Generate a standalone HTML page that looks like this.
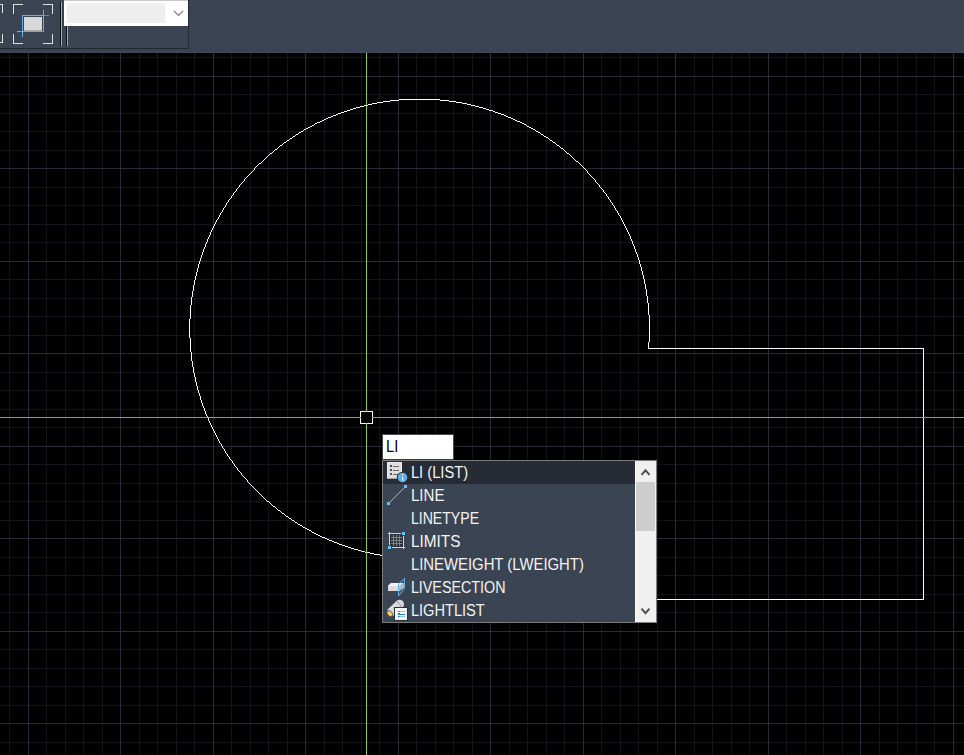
<!DOCTYPE html>
<html><head><meta charset="utf-8"><style>
*{margin:0;padding:0;box-sizing:border-box}
html,body{width:964px;height:755px;overflow:hidden;background:#000000;font-family:"Liberation Sans",sans-serif}
.abs{position:absolute}
svg{position:absolute;left:0;top:0}
.it{position:absolute;left:411px;height:23px;line-height:23px;font-size:16px;color:#f4f4f4;white-space:nowrap;transform-origin:-1px 17px}
</style></head><body>
<svg width="964" height="755" shape-rendering="crispEdges">
<path fill="#111318" d="M9 53h1v702h-1zM46 53h1v702h-1zM65 53h1v702h-1zM83 53h1v702h-1zM102 53h1v702h-1zM139 53h1v702h-1zM157 53h1v702h-1zM176 53h1v702h-1zM194 53h1v702h-1zM231 53h1v702h-1zM250 53h1v702h-1zM268 53h1v702h-1zM287 53h1v702h-1zM324 53h1v702h-1zM342 53h1v702h-1zM361 53h1v702h-1zM379 53h1v702h-1zM416 53h1v702h-1zM435 53h1v702h-1zM453 53h1v702h-1zM472 53h1v702h-1zM509 53h1v702h-1zM527 53h1v702h-1zM546 53h1v702h-1zM564 53h1v702h-1zM601 53h1v702h-1zM620 53h1v702h-1zM638 53h1v702h-1zM657 53h1v702h-1zM694 53h1v702h-1zM712 53h1v702h-1zM731 53h1v702h-1zM749 53h1v702h-1zM786 53h1v702h-1zM805 53h1v702h-1zM823 53h1v702h-1zM842 53h1v702h-1zM879 53h1v702h-1zM897 53h1v702h-1zM916 53h1v702h-1zM934 53h1v702h-1zM0 57h964v1h-964zM0 94h964v1h-964zM0 113h964v1h-964zM0 131h964v1h-964zM0 150h964v1h-964zM0 187h964v1h-964zM0 205h964v1h-964zM0 224h964v1h-964zM0 242h964v1h-964zM0 279h964v1h-964zM0 298h964v1h-964zM0 316h964v1h-964zM0 335h964v1h-964zM0 372h964v1h-964zM0 390h964v1h-964zM0 409h964v1h-964zM0 427h964v1h-964zM0 464h964v1h-964zM0 483h964v1h-964zM0 501h964v1h-964zM0 520h964v1h-964zM0 557h964v1h-964zM0 575h964v1h-964zM0 594h964v1h-964zM0 612h964v1h-964zM0 649h964v1h-964zM0 668h964v1h-964zM0 686h964v1h-964zM0 705h964v1h-964zM0 742h964v1h-964z"/><path fill="#272b38" d="M28 53h1v702h-1zM120 53h1v702h-1zM213 53h1v702h-1zM305 53h1v702h-1zM398 53h1v702h-1zM490 53h1v702h-1zM583 53h1v702h-1zM675 53h1v702h-1zM768 53h1v702h-1zM860 53h1v702h-1zM953 53h1v702h-1zM0 76h964v1h-964zM0 168h964v1h-964zM0 261h964v1h-964zM0 353h964v1h-964zM0 446h964v1h-964zM0 538h964v1h-964zM0 631h964v1h-964zM0 723h964v1h-964z"/><path fill="#171a24" d="M9 57h1v1h-1zM9 94h1v1h-1zM9 113h1v1h-1zM9 131h1v1h-1zM9 150h1v1h-1zM9 187h1v1h-1zM9 205h1v1h-1zM9 224h1v1h-1zM9 242h1v1h-1zM9 279h1v1h-1zM9 298h1v1h-1zM9 316h1v1h-1zM9 335h1v1h-1zM9 372h1v1h-1zM9 390h1v1h-1zM9 409h1v1h-1zM9 427h1v1h-1zM9 464h1v1h-1zM9 483h1v1h-1zM9 501h1v1h-1zM9 520h1v1h-1zM9 557h1v1h-1zM9 575h1v1h-1zM9 594h1v1h-1zM9 612h1v1h-1zM9 649h1v1h-1zM9 668h1v1h-1zM9 686h1v1h-1zM9 705h1v1h-1zM9 742h1v1h-1zM46 57h1v1h-1zM46 94h1v1h-1zM46 113h1v1h-1zM46 131h1v1h-1zM46 150h1v1h-1zM46 187h1v1h-1zM46 205h1v1h-1zM46 224h1v1h-1zM46 242h1v1h-1zM46 279h1v1h-1zM46 298h1v1h-1zM46 316h1v1h-1zM46 335h1v1h-1zM46 372h1v1h-1zM46 390h1v1h-1zM46 409h1v1h-1zM46 427h1v1h-1zM46 464h1v1h-1zM46 483h1v1h-1zM46 501h1v1h-1zM46 520h1v1h-1zM46 557h1v1h-1zM46 575h1v1h-1zM46 594h1v1h-1zM46 612h1v1h-1zM46 649h1v1h-1zM46 668h1v1h-1zM46 686h1v1h-1zM46 705h1v1h-1zM46 742h1v1h-1zM65 57h1v1h-1zM65 94h1v1h-1zM65 113h1v1h-1zM65 131h1v1h-1zM65 150h1v1h-1zM65 187h1v1h-1zM65 205h1v1h-1zM65 224h1v1h-1zM65 242h1v1h-1zM65 279h1v1h-1zM65 298h1v1h-1zM65 316h1v1h-1zM65 335h1v1h-1zM65 372h1v1h-1zM65 390h1v1h-1zM65 409h1v1h-1zM65 427h1v1h-1zM65 464h1v1h-1zM65 483h1v1h-1zM65 501h1v1h-1zM65 520h1v1h-1zM65 557h1v1h-1zM65 575h1v1h-1zM65 594h1v1h-1zM65 612h1v1h-1zM65 649h1v1h-1zM65 668h1v1h-1zM65 686h1v1h-1zM65 705h1v1h-1zM65 742h1v1h-1zM83 57h1v1h-1zM83 94h1v1h-1zM83 113h1v1h-1zM83 131h1v1h-1zM83 150h1v1h-1zM83 187h1v1h-1zM83 205h1v1h-1zM83 224h1v1h-1zM83 242h1v1h-1zM83 279h1v1h-1zM83 298h1v1h-1zM83 316h1v1h-1zM83 335h1v1h-1zM83 372h1v1h-1zM83 390h1v1h-1zM83 409h1v1h-1zM83 427h1v1h-1zM83 464h1v1h-1zM83 483h1v1h-1zM83 501h1v1h-1zM83 520h1v1h-1zM83 557h1v1h-1zM83 575h1v1h-1zM83 594h1v1h-1zM83 612h1v1h-1zM83 649h1v1h-1zM83 668h1v1h-1zM83 686h1v1h-1zM83 705h1v1h-1zM83 742h1v1h-1zM102 57h1v1h-1zM102 94h1v1h-1zM102 113h1v1h-1zM102 131h1v1h-1zM102 150h1v1h-1zM102 187h1v1h-1zM102 205h1v1h-1zM102 224h1v1h-1zM102 242h1v1h-1zM102 279h1v1h-1zM102 298h1v1h-1zM102 316h1v1h-1zM102 335h1v1h-1zM102 372h1v1h-1zM102 390h1v1h-1zM102 409h1v1h-1zM102 427h1v1h-1zM102 464h1v1h-1zM102 483h1v1h-1zM102 501h1v1h-1zM102 520h1v1h-1zM102 557h1v1h-1zM102 575h1v1h-1zM102 594h1v1h-1zM102 612h1v1h-1zM102 649h1v1h-1zM102 668h1v1h-1zM102 686h1v1h-1zM102 705h1v1h-1zM102 742h1v1h-1zM139 57h1v1h-1zM139 94h1v1h-1zM139 113h1v1h-1zM139 131h1v1h-1zM139 150h1v1h-1zM139 187h1v1h-1zM139 205h1v1h-1zM139 224h1v1h-1zM139 242h1v1h-1zM139 279h1v1h-1zM139 298h1v1h-1zM139 316h1v1h-1zM139 335h1v1h-1zM139 372h1v1h-1zM139 390h1v1h-1zM139 409h1v1h-1zM139 427h1v1h-1zM139 464h1v1h-1zM139 483h1v1h-1zM139 501h1v1h-1zM139 520h1v1h-1zM139 557h1v1h-1zM139 575h1v1h-1zM139 594h1v1h-1zM139 612h1v1h-1zM139 649h1v1h-1zM139 668h1v1h-1zM139 686h1v1h-1zM139 705h1v1h-1zM139 742h1v1h-1zM157 57h1v1h-1zM157 94h1v1h-1zM157 113h1v1h-1zM157 131h1v1h-1zM157 150h1v1h-1zM157 187h1v1h-1zM157 205h1v1h-1zM157 224h1v1h-1zM157 242h1v1h-1zM157 279h1v1h-1zM157 298h1v1h-1zM157 316h1v1h-1zM157 335h1v1h-1zM157 372h1v1h-1zM157 390h1v1h-1zM157 409h1v1h-1zM157 427h1v1h-1zM157 464h1v1h-1zM157 483h1v1h-1zM157 501h1v1h-1zM157 520h1v1h-1zM157 557h1v1h-1zM157 575h1v1h-1zM157 594h1v1h-1zM157 612h1v1h-1zM157 649h1v1h-1zM157 668h1v1h-1zM157 686h1v1h-1zM157 705h1v1h-1zM157 742h1v1h-1zM176 57h1v1h-1zM176 94h1v1h-1zM176 113h1v1h-1zM176 131h1v1h-1zM176 150h1v1h-1zM176 187h1v1h-1zM176 205h1v1h-1zM176 224h1v1h-1zM176 242h1v1h-1zM176 279h1v1h-1zM176 298h1v1h-1zM176 316h1v1h-1zM176 335h1v1h-1zM176 372h1v1h-1zM176 390h1v1h-1zM176 409h1v1h-1zM176 427h1v1h-1zM176 464h1v1h-1zM176 483h1v1h-1zM176 501h1v1h-1zM176 520h1v1h-1zM176 557h1v1h-1zM176 575h1v1h-1zM176 594h1v1h-1zM176 612h1v1h-1zM176 649h1v1h-1zM176 668h1v1h-1zM176 686h1v1h-1zM176 705h1v1h-1zM176 742h1v1h-1zM194 57h1v1h-1zM194 94h1v1h-1zM194 113h1v1h-1zM194 131h1v1h-1zM194 150h1v1h-1zM194 187h1v1h-1zM194 205h1v1h-1zM194 224h1v1h-1zM194 242h1v1h-1zM194 279h1v1h-1zM194 298h1v1h-1zM194 316h1v1h-1zM194 335h1v1h-1zM194 372h1v1h-1zM194 390h1v1h-1zM194 409h1v1h-1zM194 427h1v1h-1zM194 464h1v1h-1zM194 483h1v1h-1zM194 501h1v1h-1zM194 520h1v1h-1zM194 557h1v1h-1zM194 575h1v1h-1zM194 594h1v1h-1zM194 612h1v1h-1zM194 649h1v1h-1zM194 668h1v1h-1zM194 686h1v1h-1zM194 705h1v1h-1zM194 742h1v1h-1zM231 57h1v1h-1zM231 94h1v1h-1zM231 113h1v1h-1zM231 131h1v1h-1zM231 150h1v1h-1zM231 187h1v1h-1zM231 205h1v1h-1zM231 224h1v1h-1zM231 242h1v1h-1zM231 279h1v1h-1zM231 298h1v1h-1zM231 316h1v1h-1zM231 335h1v1h-1zM231 372h1v1h-1zM231 390h1v1h-1zM231 409h1v1h-1zM231 427h1v1h-1zM231 464h1v1h-1zM231 483h1v1h-1zM231 501h1v1h-1zM231 520h1v1h-1zM231 557h1v1h-1zM231 575h1v1h-1zM231 594h1v1h-1zM231 612h1v1h-1zM231 649h1v1h-1zM231 668h1v1h-1zM231 686h1v1h-1zM231 705h1v1h-1zM231 742h1v1h-1zM250 57h1v1h-1zM250 94h1v1h-1zM250 113h1v1h-1zM250 131h1v1h-1zM250 150h1v1h-1zM250 187h1v1h-1zM250 205h1v1h-1zM250 224h1v1h-1zM250 242h1v1h-1zM250 279h1v1h-1zM250 298h1v1h-1zM250 316h1v1h-1zM250 335h1v1h-1zM250 372h1v1h-1zM250 390h1v1h-1zM250 409h1v1h-1zM250 427h1v1h-1zM250 464h1v1h-1zM250 483h1v1h-1zM250 501h1v1h-1zM250 520h1v1h-1zM250 557h1v1h-1zM250 575h1v1h-1zM250 594h1v1h-1zM250 612h1v1h-1zM250 649h1v1h-1zM250 668h1v1h-1zM250 686h1v1h-1zM250 705h1v1h-1zM250 742h1v1h-1zM268 57h1v1h-1zM268 94h1v1h-1zM268 113h1v1h-1zM268 131h1v1h-1zM268 150h1v1h-1zM268 187h1v1h-1zM268 205h1v1h-1zM268 224h1v1h-1zM268 242h1v1h-1zM268 279h1v1h-1zM268 298h1v1h-1zM268 316h1v1h-1zM268 335h1v1h-1zM268 372h1v1h-1zM268 390h1v1h-1zM268 409h1v1h-1zM268 427h1v1h-1zM268 464h1v1h-1zM268 483h1v1h-1zM268 501h1v1h-1zM268 520h1v1h-1zM268 557h1v1h-1zM268 575h1v1h-1zM268 594h1v1h-1zM268 612h1v1h-1zM268 649h1v1h-1zM268 668h1v1h-1zM268 686h1v1h-1zM268 705h1v1h-1zM268 742h1v1h-1zM287 57h1v1h-1zM287 94h1v1h-1zM287 113h1v1h-1zM287 131h1v1h-1zM287 150h1v1h-1zM287 187h1v1h-1zM287 205h1v1h-1zM287 224h1v1h-1zM287 242h1v1h-1zM287 279h1v1h-1zM287 298h1v1h-1zM287 316h1v1h-1zM287 335h1v1h-1zM287 372h1v1h-1zM287 390h1v1h-1zM287 409h1v1h-1zM287 427h1v1h-1zM287 464h1v1h-1zM287 483h1v1h-1zM287 501h1v1h-1zM287 520h1v1h-1zM287 557h1v1h-1zM287 575h1v1h-1zM287 594h1v1h-1zM287 612h1v1h-1zM287 649h1v1h-1zM287 668h1v1h-1zM287 686h1v1h-1zM287 705h1v1h-1zM287 742h1v1h-1zM324 57h1v1h-1zM324 94h1v1h-1zM324 113h1v1h-1zM324 131h1v1h-1zM324 150h1v1h-1zM324 187h1v1h-1zM324 205h1v1h-1zM324 224h1v1h-1zM324 242h1v1h-1zM324 279h1v1h-1zM324 298h1v1h-1zM324 316h1v1h-1zM324 335h1v1h-1zM324 372h1v1h-1zM324 390h1v1h-1zM324 409h1v1h-1zM324 427h1v1h-1zM324 464h1v1h-1zM324 483h1v1h-1zM324 501h1v1h-1zM324 520h1v1h-1zM324 557h1v1h-1zM324 575h1v1h-1zM324 594h1v1h-1zM324 612h1v1h-1zM324 649h1v1h-1zM324 668h1v1h-1zM324 686h1v1h-1zM324 705h1v1h-1zM324 742h1v1h-1zM342 57h1v1h-1zM342 94h1v1h-1zM342 113h1v1h-1zM342 131h1v1h-1zM342 150h1v1h-1zM342 187h1v1h-1zM342 205h1v1h-1zM342 224h1v1h-1zM342 242h1v1h-1zM342 279h1v1h-1zM342 298h1v1h-1zM342 316h1v1h-1zM342 335h1v1h-1zM342 372h1v1h-1zM342 390h1v1h-1zM342 409h1v1h-1zM342 427h1v1h-1zM342 464h1v1h-1zM342 483h1v1h-1zM342 501h1v1h-1zM342 520h1v1h-1zM342 557h1v1h-1zM342 575h1v1h-1zM342 594h1v1h-1zM342 612h1v1h-1zM342 649h1v1h-1zM342 668h1v1h-1zM342 686h1v1h-1zM342 705h1v1h-1zM342 742h1v1h-1zM361 57h1v1h-1zM361 94h1v1h-1zM361 113h1v1h-1zM361 131h1v1h-1zM361 150h1v1h-1zM361 187h1v1h-1zM361 205h1v1h-1zM361 224h1v1h-1zM361 242h1v1h-1zM361 279h1v1h-1zM361 298h1v1h-1zM361 316h1v1h-1zM361 335h1v1h-1zM361 372h1v1h-1zM361 390h1v1h-1zM361 409h1v1h-1zM361 427h1v1h-1zM361 464h1v1h-1zM361 483h1v1h-1zM361 501h1v1h-1zM361 520h1v1h-1zM361 557h1v1h-1zM361 575h1v1h-1zM361 594h1v1h-1zM361 612h1v1h-1zM361 649h1v1h-1zM361 668h1v1h-1zM361 686h1v1h-1zM361 705h1v1h-1zM361 742h1v1h-1zM379 57h1v1h-1zM379 94h1v1h-1zM379 113h1v1h-1zM379 131h1v1h-1zM379 150h1v1h-1zM379 187h1v1h-1zM379 205h1v1h-1zM379 224h1v1h-1zM379 242h1v1h-1zM379 279h1v1h-1zM379 298h1v1h-1zM379 316h1v1h-1zM379 335h1v1h-1zM379 372h1v1h-1zM379 390h1v1h-1zM379 409h1v1h-1zM379 427h1v1h-1zM379 464h1v1h-1zM379 483h1v1h-1zM379 501h1v1h-1zM379 520h1v1h-1zM379 557h1v1h-1zM379 575h1v1h-1zM379 594h1v1h-1zM379 612h1v1h-1zM379 649h1v1h-1zM379 668h1v1h-1zM379 686h1v1h-1zM379 705h1v1h-1zM379 742h1v1h-1zM416 57h1v1h-1zM416 94h1v1h-1zM416 113h1v1h-1zM416 131h1v1h-1zM416 150h1v1h-1zM416 187h1v1h-1zM416 205h1v1h-1zM416 224h1v1h-1zM416 242h1v1h-1zM416 279h1v1h-1zM416 298h1v1h-1zM416 316h1v1h-1zM416 335h1v1h-1zM416 372h1v1h-1zM416 390h1v1h-1zM416 409h1v1h-1zM416 427h1v1h-1zM416 464h1v1h-1zM416 483h1v1h-1zM416 501h1v1h-1zM416 520h1v1h-1zM416 557h1v1h-1zM416 575h1v1h-1zM416 594h1v1h-1zM416 612h1v1h-1zM416 649h1v1h-1zM416 668h1v1h-1zM416 686h1v1h-1zM416 705h1v1h-1zM416 742h1v1h-1zM435 57h1v1h-1zM435 94h1v1h-1zM435 113h1v1h-1zM435 131h1v1h-1zM435 150h1v1h-1zM435 187h1v1h-1zM435 205h1v1h-1zM435 224h1v1h-1zM435 242h1v1h-1zM435 279h1v1h-1zM435 298h1v1h-1zM435 316h1v1h-1zM435 335h1v1h-1zM435 372h1v1h-1zM435 390h1v1h-1zM435 409h1v1h-1zM435 427h1v1h-1zM435 464h1v1h-1zM435 483h1v1h-1zM435 501h1v1h-1zM435 520h1v1h-1zM435 557h1v1h-1zM435 575h1v1h-1zM435 594h1v1h-1zM435 612h1v1h-1zM435 649h1v1h-1zM435 668h1v1h-1zM435 686h1v1h-1zM435 705h1v1h-1zM435 742h1v1h-1zM453 57h1v1h-1zM453 94h1v1h-1zM453 113h1v1h-1zM453 131h1v1h-1zM453 150h1v1h-1zM453 187h1v1h-1zM453 205h1v1h-1zM453 224h1v1h-1zM453 242h1v1h-1zM453 279h1v1h-1zM453 298h1v1h-1zM453 316h1v1h-1zM453 335h1v1h-1zM453 372h1v1h-1zM453 390h1v1h-1zM453 409h1v1h-1zM453 427h1v1h-1zM453 464h1v1h-1zM453 483h1v1h-1zM453 501h1v1h-1zM453 520h1v1h-1zM453 557h1v1h-1zM453 575h1v1h-1zM453 594h1v1h-1zM453 612h1v1h-1zM453 649h1v1h-1zM453 668h1v1h-1zM453 686h1v1h-1zM453 705h1v1h-1zM453 742h1v1h-1zM472 57h1v1h-1zM472 94h1v1h-1zM472 113h1v1h-1zM472 131h1v1h-1zM472 150h1v1h-1zM472 187h1v1h-1zM472 205h1v1h-1zM472 224h1v1h-1zM472 242h1v1h-1zM472 279h1v1h-1zM472 298h1v1h-1zM472 316h1v1h-1zM472 335h1v1h-1zM472 372h1v1h-1zM472 390h1v1h-1zM472 409h1v1h-1zM472 427h1v1h-1zM472 464h1v1h-1zM472 483h1v1h-1zM472 501h1v1h-1zM472 520h1v1h-1zM472 557h1v1h-1zM472 575h1v1h-1zM472 594h1v1h-1zM472 612h1v1h-1zM472 649h1v1h-1zM472 668h1v1h-1zM472 686h1v1h-1zM472 705h1v1h-1zM472 742h1v1h-1zM509 57h1v1h-1zM509 94h1v1h-1zM509 113h1v1h-1zM509 131h1v1h-1zM509 150h1v1h-1zM509 187h1v1h-1zM509 205h1v1h-1zM509 224h1v1h-1zM509 242h1v1h-1zM509 279h1v1h-1zM509 298h1v1h-1zM509 316h1v1h-1zM509 335h1v1h-1zM509 372h1v1h-1zM509 390h1v1h-1zM509 409h1v1h-1zM509 427h1v1h-1zM509 464h1v1h-1zM509 483h1v1h-1zM509 501h1v1h-1zM509 520h1v1h-1zM509 557h1v1h-1zM509 575h1v1h-1zM509 594h1v1h-1zM509 612h1v1h-1zM509 649h1v1h-1zM509 668h1v1h-1zM509 686h1v1h-1zM509 705h1v1h-1zM509 742h1v1h-1zM527 57h1v1h-1zM527 94h1v1h-1zM527 113h1v1h-1zM527 131h1v1h-1zM527 150h1v1h-1zM527 187h1v1h-1zM527 205h1v1h-1zM527 224h1v1h-1zM527 242h1v1h-1zM527 279h1v1h-1zM527 298h1v1h-1zM527 316h1v1h-1zM527 335h1v1h-1zM527 372h1v1h-1zM527 390h1v1h-1zM527 409h1v1h-1zM527 427h1v1h-1zM527 464h1v1h-1zM527 483h1v1h-1zM527 501h1v1h-1zM527 520h1v1h-1zM527 557h1v1h-1zM527 575h1v1h-1zM527 594h1v1h-1zM527 612h1v1h-1zM527 649h1v1h-1zM527 668h1v1h-1zM527 686h1v1h-1zM527 705h1v1h-1zM527 742h1v1h-1zM546 57h1v1h-1zM546 94h1v1h-1zM546 113h1v1h-1zM546 131h1v1h-1zM546 150h1v1h-1zM546 187h1v1h-1zM546 205h1v1h-1zM546 224h1v1h-1zM546 242h1v1h-1zM546 279h1v1h-1zM546 298h1v1h-1zM546 316h1v1h-1zM546 335h1v1h-1zM546 372h1v1h-1zM546 390h1v1h-1zM546 409h1v1h-1zM546 427h1v1h-1zM546 464h1v1h-1zM546 483h1v1h-1zM546 501h1v1h-1zM546 520h1v1h-1zM546 557h1v1h-1zM546 575h1v1h-1zM546 594h1v1h-1zM546 612h1v1h-1zM546 649h1v1h-1zM546 668h1v1h-1zM546 686h1v1h-1zM546 705h1v1h-1zM546 742h1v1h-1zM564 57h1v1h-1zM564 94h1v1h-1zM564 113h1v1h-1zM564 131h1v1h-1zM564 150h1v1h-1zM564 187h1v1h-1zM564 205h1v1h-1zM564 224h1v1h-1zM564 242h1v1h-1zM564 279h1v1h-1zM564 298h1v1h-1zM564 316h1v1h-1zM564 335h1v1h-1zM564 372h1v1h-1zM564 390h1v1h-1zM564 409h1v1h-1zM564 427h1v1h-1zM564 464h1v1h-1zM564 483h1v1h-1zM564 501h1v1h-1zM564 520h1v1h-1zM564 557h1v1h-1zM564 575h1v1h-1zM564 594h1v1h-1zM564 612h1v1h-1zM564 649h1v1h-1zM564 668h1v1h-1zM564 686h1v1h-1zM564 705h1v1h-1zM564 742h1v1h-1zM601 57h1v1h-1zM601 94h1v1h-1zM601 113h1v1h-1zM601 131h1v1h-1zM601 150h1v1h-1zM601 187h1v1h-1zM601 205h1v1h-1zM601 224h1v1h-1zM601 242h1v1h-1zM601 279h1v1h-1zM601 298h1v1h-1zM601 316h1v1h-1zM601 335h1v1h-1zM601 372h1v1h-1zM601 390h1v1h-1zM601 409h1v1h-1zM601 427h1v1h-1zM601 464h1v1h-1zM601 483h1v1h-1zM601 501h1v1h-1zM601 520h1v1h-1zM601 557h1v1h-1zM601 575h1v1h-1zM601 594h1v1h-1zM601 612h1v1h-1zM601 649h1v1h-1zM601 668h1v1h-1zM601 686h1v1h-1zM601 705h1v1h-1zM601 742h1v1h-1zM620 57h1v1h-1zM620 94h1v1h-1zM620 113h1v1h-1zM620 131h1v1h-1zM620 150h1v1h-1zM620 187h1v1h-1zM620 205h1v1h-1zM620 224h1v1h-1zM620 242h1v1h-1zM620 279h1v1h-1zM620 298h1v1h-1zM620 316h1v1h-1zM620 335h1v1h-1zM620 372h1v1h-1zM620 390h1v1h-1zM620 409h1v1h-1zM620 427h1v1h-1zM620 464h1v1h-1zM620 483h1v1h-1zM620 501h1v1h-1zM620 520h1v1h-1zM620 557h1v1h-1zM620 575h1v1h-1zM620 594h1v1h-1zM620 612h1v1h-1zM620 649h1v1h-1zM620 668h1v1h-1zM620 686h1v1h-1zM620 705h1v1h-1zM620 742h1v1h-1zM638 57h1v1h-1zM638 94h1v1h-1zM638 113h1v1h-1zM638 131h1v1h-1zM638 150h1v1h-1zM638 187h1v1h-1zM638 205h1v1h-1zM638 224h1v1h-1zM638 242h1v1h-1zM638 279h1v1h-1zM638 298h1v1h-1zM638 316h1v1h-1zM638 335h1v1h-1zM638 372h1v1h-1zM638 390h1v1h-1zM638 409h1v1h-1zM638 427h1v1h-1zM638 464h1v1h-1zM638 483h1v1h-1zM638 501h1v1h-1zM638 520h1v1h-1zM638 557h1v1h-1zM638 575h1v1h-1zM638 594h1v1h-1zM638 612h1v1h-1zM638 649h1v1h-1zM638 668h1v1h-1zM638 686h1v1h-1zM638 705h1v1h-1zM638 742h1v1h-1zM657 57h1v1h-1zM657 94h1v1h-1zM657 113h1v1h-1zM657 131h1v1h-1zM657 150h1v1h-1zM657 187h1v1h-1zM657 205h1v1h-1zM657 224h1v1h-1zM657 242h1v1h-1zM657 279h1v1h-1zM657 298h1v1h-1zM657 316h1v1h-1zM657 335h1v1h-1zM657 372h1v1h-1zM657 390h1v1h-1zM657 409h1v1h-1zM657 427h1v1h-1zM657 464h1v1h-1zM657 483h1v1h-1zM657 501h1v1h-1zM657 520h1v1h-1zM657 557h1v1h-1zM657 575h1v1h-1zM657 594h1v1h-1zM657 612h1v1h-1zM657 649h1v1h-1zM657 668h1v1h-1zM657 686h1v1h-1zM657 705h1v1h-1zM657 742h1v1h-1zM694 57h1v1h-1zM694 94h1v1h-1zM694 113h1v1h-1zM694 131h1v1h-1zM694 150h1v1h-1zM694 187h1v1h-1zM694 205h1v1h-1zM694 224h1v1h-1zM694 242h1v1h-1zM694 279h1v1h-1zM694 298h1v1h-1zM694 316h1v1h-1zM694 335h1v1h-1zM694 372h1v1h-1zM694 390h1v1h-1zM694 409h1v1h-1zM694 427h1v1h-1zM694 464h1v1h-1zM694 483h1v1h-1zM694 501h1v1h-1zM694 520h1v1h-1zM694 557h1v1h-1zM694 575h1v1h-1zM694 594h1v1h-1zM694 612h1v1h-1zM694 649h1v1h-1zM694 668h1v1h-1zM694 686h1v1h-1zM694 705h1v1h-1zM694 742h1v1h-1zM712 57h1v1h-1zM712 94h1v1h-1zM712 113h1v1h-1zM712 131h1v1h-1zM712 150h1v1h-1zM712 187h1v1h-1zM712 205h1v1h-1zM712 224h1v1h-1zM712 242h1v1h-1zM712 279h1v1h-1zM712 298h1v1h-1zM712 316h1v1h-1zM712 335h1v1h-1zM712 372h1v1h-1zM712 390h1v1h-1zM712 409h1v1h-1zM712 427h1v1h-1zM712 464h1v1h-1zM712 483h1v1h-1zM712 501h1v1h-1zM712 520h1v1h-1zM712 557h1v1h-1zM712 575h1v1h-1zM712 594h1v1h-1zM712 612h1v1h-1zM712 649h1v1h-1zM712 668h1v1h-1zM712 686h1v1h-1zM712 705h1v1h-1zM712 742h1v1h-1zM731 57h1v1h-1zM731 94h1v1h-1zM731 113h1v1h-1zM731 131h1v1h-1zM731 150h1v1h-1zM731 187h1v1h-1zM731 205h1v1h-1zM731 224h1v1h-1zM731 242h1v1h-1zM731 279h1v1h-1zM731 298h1v1h-1zM731 316h1v1h-1zM731 335h1v1h-1zM731 372h1v1h-1zM731 390h1v1h-1zM731 409h1v1h-1zM731 427h1v1h-1zM731 464h1v1h-1zM731 483h1v1h-1zM731 501h1v1h-1zM731 520h1v1h-1zM731 557h1v1h-1zM731 575h1v1h-1zM731 594h1v1h-1zM731 612h1v1h-1zM731 649h1v1h-1zM731 668h1v1h-1zM731 686h1v1h-1zM731 705h1v1h-1zM731 742h1v1h-1zM749 57h1v1h-1zM749 94h1v1h-1zM749 113h1v1h-1zM749 131h1v1h-1zM749 150h1v1h-1zM749 187h1v1h-1zM749 205h1v1h-1zM749 224h1v1h-1zM749 242h1v1h-1zM749 279h1v1h-1zM749 298h1v1h-1zM749 316h1v1h-1zM749 335h1v1h-1zM749 372h1v1h-1zM749 390h1v1h-1zM749 409h1v1h-1zM749 427h1v1h-1zM749 464h1v1h-1zM749 483h1v1h-1zM749 501h1v1h-1zM749 520h1v1h-1zM749 557h1v1h-1zM749 575h1v1h-1zM749 594h1v1h-1zM749 612h1v1h-1zM749 649h1v1h-1zM749 668h1v1h-1zM749 686h1v1h-1zM749 705h1v1h-1zM749 742h1v1h-1zM786 57h1v1h-1zM786 94h1v1h-1zM786 113h1v1h-1zM786 131h1v1h-1zM786 150h1v1h-1zM786 187h1v1h-1zM786 205h1v1h-1zM786 224h1v1h-1zM786 242h1v1h-1zM786 279h1v1h-1zM786 298h1v1h-1zM786 316h1v1h-1zM786 335h1v1h-1zM786 372h1v1h-1zM786 390h1v1h-1zM786 409h1v1h-1zM786 427h1v1h-1zM786 464h1v1h-1zM786 483h1v1h-1zM786 501h1v1h-1zM786 520h1v1h-1zM786 557h1v1h-1zM786 575h1v1h-1zM786 594h1v1h-1zM786 612h1v1h-1zM786 649h1v1h-1zM786 668h1v1h-1zM786 686h1v1h-1zM786 705h1v1h-1zM786 742h1v1h-1zM805 57h1v1h-1zM805 94h1v1h-1zM805 113h1v1h-1zM805 131h1v1h-1zM805 150h1v1h-1zM805 187h1v1h-1zM805 205h1v1h-1zM805 224h1v1h-1zM805 242h1v1h-1zM805 279h1v1h-1zM805 298h1v1h-1zM805 316h1v1h-1zM805 335h1v1h-1zM805 372h1v1h-1zM805 390h1v1h-1zM805 409h1v1h-1zM805 427h1v1h-1zM805 464h1v1h-1zM805 483h1v1h-1zM805 501h1v1h-1zM805 520h1v1h-1zM805 557h1v1h-1zM805 575h1v1h-1zM805 594h1v1h-1zM805 612h1v1h-1zM805 649h1v1h-1zM805 668h1v1h-1zM805 686h1v1h-1zM805 705h1v1h-1zM805 742h1v1h-1zM823 57h1v1h-1zM823 94h1v1h-1zM823 113h1v1h-1zM823 131h1v1h-1zM823 150h1v1h-1zM823 187h1v1h-1zM823 205h1v1h-1zM823 224h1v1h-1zM823 242h1v1h-1zM823 279h1v1h-1zM823 298h1v1h-1zM823 316h1v1h-1zM823 335h1v1h-1zM823 372h1v1h-1zM823 390h1v1h-1zM823 409h1v1h-1zM823 427h1v1h-1zM823 464h1v1h-1zM823 483h1v1h-1zM823 501h1v1h-1zM823 520h1v1h-1zM823 557h1v1h-1zM823 575h1v1h-1zM823 594h1v1h-1zM823 612h1v1h-1zM823 649h1v1h-1zM823 668h1v1h-1zM823 686h1v1h-1zM823 705h1v1h-1zM823 742h1v1h-1zM842 57h1v1h-1zM842 94h1v1h-1zM842 113h1v1h-1zM842 131h1v1h-1zM842 150h1v1h-1zM842 187h1v1h-1zM842 205h1v1h-1zM842 224h1v1h-1zM842 242h1v1h-1zM842 279h1v1h-1zM842 298h1v1h-1zM842 316h1v1h-1zM842 335h1v1h-1zM842 372h1v1h-1zM842 390h1v1h-1zM842 409h1v1h-1zM842 427h1v1h-1zM842 464h1v1h-1zM842 483h1v1h-1zM842 501h1v1h-1zM842 520h1v1h-1zM842 557h1v1h-1zM842 575h1v1h-1zM842 594h1v1h-1zM842 612h1v1h-1zM842 649h1v1h-1zM842 668h1v1h-1zM842 686h1v1h-1zM842 705h1v1h-1zM842 742h1v1h-1zM879 57h1v1h-1zM879 94h1v1h-1zM879 113h1v1h-1zM879 131h1v1h-1zM879 150h1v1h-1zM879 187h1v1h-1zM879 205h1v1h-1zM879 224h1v1h-1zM879 242h1v1h-1zM879 279h1v1h-1zM879 298h1v1h-1zM879 316h1v1h-1zM879 335h1v1h-1zM879 372h1v1h-1zM879 390h1v1h-1zM879 409h1v1h-1zM879 427h1v1h-1zM879 464h1v1h-1zM879 483h1v1h-1zM879 501h1v1h-1zM879 520h1v1h-1zM879 557h1v1h-1zM879 575h1v1h-1zM879 594h1v1h-1zM879 612h1v1h-1zM879 649h1v1h-1zM879 668h1v1h-1zM879 686h1v1h-1zM879 705h1v1h-1zM879 742h1v1h-1zM897 57h1v1h-1zM897 94h1v1h-1zM897 113h1v1h-1zM897 131h1v1h-1zM897 150h1v1h-1zM897 187h1v1h-1zM897 205h1v1h-1zM897 224h1v1h-1zM897 242h1v1h-1zM897 279h1v1h-1zM897 298h1v1h-1zM897 316h1v1h-1zM897 335h1v1h-1zM897 372h1v1h-1zM897 390h1v1h-1zM897 409h1v1h-1zM897 427h1v1h-1zM897 464h1v1h-1zM897 483h1v1h-1zM897 501h1v1h-1zM897 520h1v1h-1zM897 557h1v1h-1zM897 575h1v1h-1zM897 594h1v1h-1zM897 612h1v1h-1zM897 649h1v1h-1zM897 668h1v1h-1zM897 686h1v1h-1zM897 705h1v1h-1zM897 742h1v1h-1zM916 57h1v1h-1zM916 94h1v1h-1zM916 113h1v1h-1zM916 131h1v1h-1zM916 150h1v1h-1zM916 187h1v1h-1zM916 205h1v1h-1zM916 224h1v1h-1zM916 242h1v1h-1zM916 279h1v1h-1zM916 298h1v1h-1zM916 316h1v1h-1zM916 335h1v1h-1zM916 372h1v1h-1zM916 390h1v1h-1zM916 409h1v1h-1zM916 427h1v1h-1zM916 464h1v1h-1zM916 483h1v1h-1zM916 501h1v1h-1zM916 520h1v1h-1zM916 557h1v1h-1zM916 575h1v1h-1zM916 594h1v1h-1zM916 612h1v1h-1zM916 649h1v1h-1zM916 668h1v1h-1zM916 686h1v1h-1zM916 705h1v1h-1zM916 742h1v1h-1zM934 57h1v1h-1zM934 94h1v1h-1zM934 113h1v1h-1zM934 131h1v1h-1zM934 150h1v1h-1zM934 187h1v1h-1zM934 205h1v1h-1zM934 224h1v1h-1zM934 242h1v1h-1zM934 279h1v1h-1zM934 298h1v1h-1zM934 316h1v1h-1zM934 335h1v1h-1zM934 372h1v1h-1zM934 390h1v1h-1zM934 409h1v1h-1zM934 427h1v1h-1zM934 464h1v1h-1zM934 483h1v1h-1zM934 501h1v1h-1zM934 520h1v1h-1zM934 557h1v1h-1zM934 575h1v1h-1zM934 594h1v1h-1zM934 612h1v1h-1zM934 649h1v1h-1zM934 668h1v1h-1zM934 686h1v1h-1zM934 705h1v1h-1zM934 742h1v1h-1z"/><path fill="#2a2e3e" d="M9 76h1v1h-1zM9 168h1v1h-1zM9 261h1v1h-1zM9 353h1v1h-1zM9 446h1v1h-1zM9 538h1v1h-1zM9 631h1v1h-1zM9 723h1v1h-1zM28 57h1v1h-1zM28 94h1v1h-1zM28 113h1v1h-1zM28 131h1v1h-1zM28 150h1v1h-1zM28 187h1v1h-1zM28 205h1v1h-1zM28 224h1v1h-1zM28 242h1v1h-1zM28 279h1v1h-1zM28 298h1v1h-1zM28 316h1v1h-1zM28 335h1v1h-1zM28 372h1v1h-1zM28 390h1v1h-1zM28 409h1v1h-1zM28 427h1v1h-1zM28 464h1v1h-1zM28 483h1v1h-1zM28 501h1v1h-1zM28 520h1v1h-1zM28 557h1v1h-1zM28 575h1v1h-1zM28 594h1v1h-1zM28 612h1v1h-1zM28 649h1v1h-1zM28 668h1v1h-1zM28 686h1v1h-1zM28 705h1v1h-1zM28 742h1v1h-1zM46 76h1v1h-1zM46 168h1v1h-1zM46 261h1v1h-1zM46 353h1v1h-1zM46 446h1v1h-1zM46 538h1v1h-1zM46 631h1v1h-1zM46 723h1v1h-1zM65 76h1v1h-1zM65 168h1v1h-1zM65 261h1v1h-1zM65 353h1v1h-1zM65 446h1v1h-1zM65 538h1v1h-1zM65 631h1v1h-1zM65 723h1v1h-1zM83 76h1v1h-1zM83 168h1v1h-1zM83 261h1v1h-1zM83 353h1v1h-1zM83 446h1v1h-1zM83 538h1v1h-1zM83 631h1v1h-1zM83 723h1v1h-1zM102 76h1v1h-1zM102 168h1v1h-1zM102 261h1v1h-1zM102 353h1v1h-1zM102 446h1v1h-1zM102 538h1v1h-1zM102 631h1v1h-1zM102 723h1v1h-1zM120 57h1v1h-1zM120 94h1v1h-1zM120 113h1v1h-1zM120 131h1v1h-1zM120 150h1v1h-1zM120 187h1v1h-1zM120 205h1v1h-1zM120 224h1v1h-1zM120 242h1v1h-1zM120 279h1v1h-1zM120 298h1v1h-1zM120 316h1v1h-1zM120 335h1v1h-1zM120 372h1v1h-1zM120 390h1v1h-1zM120 409h1v1h-1zM120 427h1v1h-1zM120 464h1v1h-1zM120 483h1v1h-1zM120 501h1v1h-1zM120 520h1v1h-1zM120 557h1v1h-1zM120 575h1v1h-1zM120 594h1v1h-1zM120 612h1v1h-1zM120 649h1v1h-1zM120 668h1v1h-1zM120 686h1v1h-1zM120 705h1v1h-1zM120 742h1v1h-1zM139 76h1v1h-1zM139 168h1v1h-1zM139 261h1v1h-1zM139 353h1v1h-1zM139 446h1v1h-1zM139 538h1v1h-1zM139 631h1v1h-1zM139 723h1v1h-1zM157 76h1v1h-1zM157 168h1v1h-1zM157 261h1v1h-1zM157 353h1v1h-1zM157 446h1v1h-1zM157 538h1v1h-1zM157 631h1v1h-1zM157 723h1v1h-1zM176 76h1v1h-1zM176 168h1v1h-1zM176 261h1v1h-1zM176 353h1v1h-1zM176 446h1v1h-1zM176 538h1v1h-1zM176 631h1v1h-1zM176 723h1v1h-1zM194 76h1v1h-1zM194 168h1v1h-1zM194 261h1v1h-1zM194 353h1v1h-1zM194 446h1v1h-1zM194 538h1v1h-1zM194 631h1v1h-1zM194 723h1v1h-1zM213 57h1v1h-1zM213 94h1v1h-1zM213 113h1v1h-1zM213 131h1v1h-1zM213 150h1v1h-1zM213 187h1v1h-1zM213 205h1v1h-1zM213 224h1v1h-1zM213 242h1v1h-1zM213 279h1v1h-1zM213 298h1v1h-1zM213 316h1v1h-1zM213 335h1v1h-1zM213 372h1v1h-1zM213 390h1v1h-1zM213 409h1v1h-1zM213 427h1v1h-1zM213 464h1v1h-1zM213 483h1v1h-1zM213 501h1v1h-1zM213 520h1v1h-1zM213 557h1v1h-1zM213 575h1v1h-1zM213 594h1v1h-1zM213 612h1v1h-1zM213 649h1v1h-1zM213 668h1v1h-1zM213 686h1v1h-1zM213 705h1v1h-1zM213 742h1v1h-1zM231 76h1v1h-1zM231 168h1v1h-1zM231 261h1v1h-1zM231 353h1v1h-1zM231 446h1v1h-1zM231 538h1v1h-1zM231 631h1v1h-1zM231 723h1v1h-1zM250 76h1v1h-1zM250 168h1v1h-1zM250 261h1v1h-1zM250 353h1v1h-1zM250 446h1v1h-1zM250 538h1v1h-1zM250 631h1v1h-1zM250 723h1v1h-1zM268 76h1v1h-1zM268 168h1v1h-1zM268 261h1v1h-1zM268 353h1v1h-1zM268 446h1v1h-1zM268 538h1v1h-1zM268 631h1v1h-1zM268 723h1v1h-1zM287 76h1v1h-1zM287 168h1v1h-1zM287 261h1v1h-1zM287 353h1v1h-1zM287 446h1v1h-1zM287 538h1v1h-1zM287 631h1v1h-1zM287 723h1v1h-1zM305 57h1v1h-1zM305 94h1v1h-1zM305 113h1v1h-1zM305 131h1v1h-1zM305 150h1v1h-1zM305 187h1v1h-1zM305 205h1v1h-1zM305 224h1v1h-1zM305 242h1v1h-1zM305 279h1v1h-1zM305 298h1v1h-1zM305 316h1v1h-1zM305 335h1v1h-1zM305 372h1v1h-1zM305 390h1v1h-1zM305 409h1v1h-1zM305 427h1v1h-1zM305 464h1v1h-1zM305 483h1v1h-1zM305 501h1v1h-1zM305 520h1v1h-1zM305 557h1v1h-1zM305 575h1v1h-1zM305 594h1v1h-1zM305 612h1v1h-1zM305 649h1v1h-1zM305 668h1v1h-1zM305 686h1v1h-1zM305 705h1v1h-1zM305 742h1v1h-1zM324 76h1v1h-1zM324 168h1v1h-1zM324 261h1v1h-1zM324 353h1v1h-1zM324 446h1v1h-1zM324 538h1v1h-1zM324 631h1v1h-1zM324 723h1v1h-1zM342 76h1v1h-1zM342 168h1v1h-1zM342 261h1v1h-1zM342 353h1v1h-1zM342 446h1v1h-1zM342 538h1v1h-1zM342 631h1v1h-1zM342 723h1v1h-1zM361 76h1v1h-1zM361 168h1v1h-1zM361 261h1v1h-1zM361 353h1v1h-1zM361 446h1v1h-1zM361 538h1v1h-1zM361 631h1v1h-1zM361 723h1v1h-1zM379 76h1v1h-1zM379 168h1v1h-1zM379 261h1v1h-1zM379 353h1v1h-1zM379 446h1v1h-1zM379 538h1v1h-1zM379 631h1v1h-1zM379 723h1v1h-1zM398 57h1v1h-1zM398 94h1v1h-1zM398 113h1v1h-1zM398 131h1v1h-1zM398 150h1v1h-1zM398 187h1v1h-1zM398 205h1v1h-1zM398 224h1v1h-1zM398 242h1v1h-1zM398 279h1v1h-1zM398 298h1v1h-1zM398 316h1v1h-1zM398 335h1v1h-1zM398 372h1v1h-1zM398 390h1v1h-1zM398 409h1v1h-1zM398 427h1v1h-1zM398 464h1v1h-1zM398 483h1v1h-1zM398 501h1v1h-1zM398 520h1v1h-1zM398 557h1v1h-1zM398 575h1v1h-1zM398 594h1v1h-1zM398 612h1v1h-1zM398 649h1v1h-1zM398 668h1v1h-1zM398 686h1v1h-1zM398 705h1v1h-1zM398 742h1v1h-1zM416 76h1v1h-1zM416 168h1v1h-1zM416 261h1v1h-1zM416 353h1v1h-1zM416 446h1v1h-1zM416 538h1v1h-1zM416 631h1v1h-1zM416 723h1v1h-1zM435 76h1v1h-1zM435 168h1v1h-1zM435 261h1v1h-1zM435 353h1v1h-1zM435 446h1v1h-1zM435 538h1v1h-1zM435 631h1v1h-1zM435 723h1v1h-1zM453 76h1v1h-1zM453 168h1v1h-1zM453 261h1v1h-1zM453 353h1v1h-1zM453 446h1v1h-1zM453 538h1v1h-1zM453 631h1v1h-1zM453 723h1v1h-1zM472 76h1v1h-1zM472 168h1v1h-1zM472 261h1v1h-1zM472 353h1v1h-1zM472 446h1v1h-1zM472 538h1v1h-1zM472 631h1v1h-1zM472 723h1v1h-1zM490 57h1v1h-1zM490 94h1v1h-1zM490 113h1v1h-1zM490 131h1v1h-1zM490 150h1v1h-1zM490 187h1v1h-1zM490 205h1v1h-1zM490 224h1v1h-1zM490 242h1v1h-1zM490 279h1v1h-1zM490 298h1v1h-1zM490 316h1v1h-1zM490 335h1v1h-1zM490 372h1v1h-1zM490 390h1v1h-1zM490 409h1v1h-1zM490 427h1v1h-1zM490 464h1v1h-1zM490 483h1v1h-1zM490 501h1v1h-1zM490 520h1v1h-1zM490 557h1v1h-1zM490 575h1v1h-1zM490 594h1v1h-1zM490 612h1v1h-1zM490 649h1v1h-1zM490 668h1v1h-1zM490 686h1v1h-1zM490 705h1v1h-1zM490 742h1v1h-1zM509 76h1v1h-1zM509 168h1v1h-1zM509 261h1v1h-1zM509 353h1v1h-1zM509 446h1v1h-1zM509 538h1v1h-1zM509 631h1v1h-1zM509 723h1v1h-1zM527 76h1v1h-1zM527 168h1v1h-1zM527 261h1v1h-1zM527 353h1v1h-1zM527 446h1v1h-1zM527 538h1v1h-1zM527 631h1v1h-1zM527 723h1v1h-1zM546 76h1v1h-1zM546 168h1v1h-1zM546 261h1v1h-1zM546 353h1v1h-1zM546 446h1v1h-1zM546 538h1v1h-1zM546 631h1v1h-1zM546 723h1v1h-1zM564 76h1v1h-1zM564 168h1v1h-1zM564 261h1v1h-1zM564 353h1v1h-1zM564 446h1v1h-1zM564 538h1v1h-1zM564 631h1v1h-1zM564 723h1v1h-1zM583 57h1v1h-1zM583 94h1v1h-1zM583 113h1v1h-1zM583 131h1v1h-1zM583 150h1v1h-1zM583 187h1v1h-1zM583 205h1v1h-1zM583 224h1v1h-1zM583 242h1v1h-1zM583 279h1v1h-1zM583 298h1v1h-1zM583 316h1v1h-1zM583 335h1v1h-1zM583 372h1v1h-1zM583 390h1v1h-1zM583 409h1v1h-1zM583 427h1v1h-1zM583 464h1v1h-1zM583 483h1v1h-1zM583 501h1v1h-1zM583 520h1v1h-1zM583 557h1v1h-1zM583 575h1v1h-1zM583 594h1v1h-1zM583 612h1v1h-1zM583 649h1v1h-1zM583 668h1v1h-1zM583 686h1v1h-1zM583 705h1v1h-1zM583 742h1v1h-1zM601 76h1v1h-1zM601 168h1v1h-1zM601 261h1v1h-1zM601 353h1v1h-1zM601 446h1v1h-1zM601 538h1v1h-1zM601 631h1v1h-1zM601 723h1v1h-1zM620 76h1v1h-1zM620 168h1v1h-1zM620 261h1v1h-1zM620 353h1v1h-1zM620 446h1v1h-1zM620 538h1v1h-1zM620 631h1v1h-1zM620 723h1v1h-1zM638 76h1v1h-1zM638 168h1v1h-1zM638 261h1v1h-1zM638 353h1v1h-1zM638 446h1v1h-1zM638 538h1v1h-1zM638 631h1v1h-1zM638 723h1v1h-1zM657 76h1v1h-1zM657 168h1v1h-1zM657 261h1v1h-1zM657 353h1v1h-1zM657 446h1v1h-1zM657 538h1v1h-1zM657 631h1v1h-1zM657 723h1v1h-1zM675 57h1v1h-1zM675 94h1v1h-1zM675 113h1v1h-1zM675 131h1v1h-1zM675 150h1v1h-1zM675 187h1v1h-1zM675 205h1v1h-1zM675 224h1v1h-1zM675 242h1v1h-1zM675 279h1v1h-1zM675 298h1v1h-1zM675 316h1v1h-1zM675 335h1v1h-1zM675 372h1v1h-1zM675 390h1v1h-1zM675 409h1v1h-1zM675 427h1v1h-1zM675 464h1v1h-1zM675 483h1v1h-1zM675 501h1v1h-1zM675 520h1v1h-1zM675 557h1v1h-1zM675 575h1v1h-1zM675 594h1v1h-1zM675 612h1v1h-1zM675 649h1v1h-1zM675 668h1v1h-1zM675 686h1v1h-1zM675 705h1v1h-1zM675 742h1v1h-1zM694 76h1v1h-1zM694 168h1v1h-1zM694 261h1v1h-1zM694 353h1v1h-1zM694 446h1v1h-1zM694 538h1v1h-1zM694 631h1v1h-1zM694 723h1v1h-1zM712 76h1v1h-1zM712 168h1v1h-1zM712 261h1v1h-1zM712 353h1v1h-1zM712 446h1v1h-1zM712 538h1v1h-1zM712 631h1v1h-1zM712 723h1v1h-1zM731 76h1v1h-1zM731 168h1v1h-1zM731 261h1v1h-1zM731 353h1v1h-1zM731 446h1v1h-1zM731 538h1v1h-1zM731 631h1v1h-1zM731 723h1v1h-1zM749 76h1v1h-1zM749 168h1v1h-1zM749 261h1v1h-1zM749 353h1v1h-1zM749 446h1v1h-1zM749 538h1v1h-1zM749 631h1v1h-1zM749 723h1v1h-1zM768 57h1v1h-1zM768 94h1v1h-1zM768 113h1v1h-1zM768 131h1v1h-1zM768 150h1v1h-1zM768 187h1v1h-1zM768 205h1v1h-1zM768 224h1v1h-1zM768 242h1v1h-1zM768 279h1v1h-1zM768 298h1v1h-1zM768 316h1v1h-1zM768 335h1v1h-1zM768 372h1v1h-1zM768 390h1v1h-1zM768 409h1v1h-1zM768 427h1v1h-1zM768 464h1v1h-1zM768 483h1v1h-1zM768 501h1v1h-1zM768 520h1v1h-1zM768 557h1v1h-1zM768 575h1v1h-1zM768 594h1v1h-1zM768 612h1v1h-1zM768 649h1v1h-1zM768 668h1v1h-1zM768 686h1v1h-1zM768 705h1v1h-1zM768 742h1v1h-1zM786 76h1v1h-1zM786 168h1v1h-1zM786 261h1v1h-1zM786 353h1v1h-1zM786 446h1v1h-1zM786 538h1v1h-1zM786 631h1v1h-1zM786 723h1v1h-1zM805 76h1v1h-1zM805 168h1v1h-1zM805 261h1v1h-1zM805 353h1v1h-1zM805 446h1v1h-1zM805 538h1v1h-1zM805 631h1v1h-1zM805 723h1v1h-1zM823 76h1v1h-1zM823 168h1v1h-1zM823 261h1v1h-1zM823 353h1v1h-1zM823 446h1v1h-1zM823 538h1v1h-1zM823 631h1v1h-1zM823 723h1v1h-1zM842 76h1v1h-1zM842 168h1v1h-1zM842 261h1v1h-1zM842 353h1v1h-1zM842 446h1v1h-1zM842 538h1v1h-1zM842 631h1v1h-1zM842 723h1v1h-1zM860 57h1v1h-1zM860 94h1v1h-1zM860 113h1v1h-1zM860 131h1v1h-1zM860 150h1v1h-1zM860 187h1v1h-1zM860 205h1v1h-1zM860 224h1v1h-1zM860 242h1v1h-1zM860 279h1v1h-1zM860 298h1v1h-1zM860 316h1v1h-1zM860 335h1v1h-1zM860 372h1v1h-1zM860 390h1v1h-1zM860 409h1v1h-1zM860 427h1v1h-1zM860 464h1v1h-1zM860 483h1v1h-1zM860 501h1v1h-1zM860 520h1v1h-1zM860 557h1v1h-1zM860 575h1v1h-1zM860 594h1v1h-1zM860 612h1v1h-1zM860 649h1v1h-1zM860 668h1v1h-1zM860 686h1v1h-1zM860 705h1v1h-1zM860 742h1v1h-1zM879 76h1v1h-1zM879 168h1v1h-1zM879 261h1v1h-1zM879 353h1v1h-1zM879 446h1v1h-1zM879 538h1v1h-1zM879 631h1v1h-1zM879 723h1v1h-1zM897 76h1v1h-1zM897 168h1v1h-1zM897 261h1v1h-1zM897 353h1v1h-1zM897 446h1v1h-1zM897 538h1v1h-1zM897 631h1v1h-1zM897 723h1v1h-1zM916 76h1v1h-1zM916 168h1v1h-1zM916 261h1v1h-1zM916 353h1v1h-1zM916 446h1v1h-1zM916 538h1v1h-1zM916 631h1v1h-1zM916 723h1v1h-1zM934 76h1v1h-1zM934 168h1v1h-1zM934 261h1v1h-1zM934 353h1v1h-1zM934 446h1v1h-1zM934 538h1v1h-1zM934 631h1v1h-1zM934 723h1v1h-1zM953 57h1v1h-1zM953 94h1v1h-1zM953 113h1v1h-1zM953 131h1v1h-1zM953 150h1v1h-1zM953 187h1v1h-1zM953 205h1v1h-1zM953 224h1v1h-1zM953 242h1v1h-1zM953 279h1v1h-1zM953 298h1v1h-1zM953 316h1v1h-1zM953 335h1v1h-1zM953 372h1v1h-1zM953 390h1v1h-1zM953 409h1v1h-1zM953 427h1v1h-1zM953 464h1v1h-1zM953 483h1v1h-1zM953 501h1v1h-1zM953 520h1v1h-1zM953 557h1v1h-1zM953 575h1v1h-1zM953 594h1v1h-1zM953 612h1v1h-1zM953 649h1v1h-1zM953 668h1v1h-1zM953 686h1v1h-1zM953 705h1v1h-1zM953 742h1v1h-1z"/><path fill="#30354a" d="M28 76h1v1h-1zM28 168h1v1h-1zM28 261h1v1h-1zM28 353h1v1h-1zM28 446h1v1h-1zM28 538h1v1h-1zM28 631h1v1h-1zM28 723h1v1h-1zM120 76h1v1h-1zM120 168h1v1h-1zM120 261h1v1h-1zM120 353h1v1h-1zM120 446h1v1h-1zM120 538h1v1h-1zM120 631h1v1h-1zM120 723h1v1h-1zM213 76h1v1h-1zM213 168h1v1h-1zM213 261h1v1h-1zM213 353h1v1h-1zM213 446h1v1h-1zM213 538h1v1h-1zM213 631h1v1h-1zM213 723h1v1h-1zM305 76h1v1h-1zM305 168h1v1h-1zM305 261h1v1h-1zM305 353h1v1h-1zM305 446h1v1h-1zM305 538h1v1h-1zM305 631h1v1h-1zM305 723h1v1h-1zM398 76h1v1h-1zM398 168h1v1h-1zM398 261h1v1h-1zM398 353h1v1h-1zM398 446h1v1h-1zM398 538h1v1h-1zM398 631h1v1h-1zM398 723h1v1h-1zM490 76h1v1h-1zM490 168h1v1h-1zM490 261h1v1h-1zM490 353h1v1h-1zM490 446h1v1h-1zM490 538h1v1h-1zM490 631h1v1h-1zM490 723h1v1h-1zM583 76h1v1h-1zM583 168h1v1h-1zM583 261h1v1h-1zM583 353h1v1h-1zM583 446h1v1h-1zM583 538h1v1h-1zM583 631h1v1h-1zM583 723h1v1h-1zM675 76h1v1h-1zM675 168h1v1h-1zM675 261h1v1h-1zM675 353h1v1h-1zM675 446h1v1h-1zM675 538h1v1h-1zM675 631h1v1h-1zM675 723h1v1h-1zM768 76h1v1h-1zM768 168h1v1h-1zM768 261h1v1h-1zM768 353h1v1h-1zM768 446h1v1h-1zM768 538h1v1h-1zM768 631h1v1h-1zM768 723h1v1h-1zM860 76h1v1h-1zM860 168h1v1h-1zM860 261h1v1h-1zM860 353h1v1h-1zM860 446h1v1h-1zM860 538h1v1h-1zM860 631h1v1h-1zM860 723h1v1h-1zM953 76h1v1h-1zM953 168h1v1h-1zM953 261h1v1h-1zM953 353h1v1h-1zM953 446h1v1h-1zM953 538h1v1h-1zM953 631h1v1h-1zM953 723h1v1h-1z"/>
<path fill="#ffffff" d="M399 99h41v1h-41zM390 100h9v1h-9zM440 100h9v1h-9zM383 101h7v1h-7zM449 101h7v1h-7zM377 102h6v1h-6zM456 102h6v1h-6zM372 103h5v1h-5zM462 103h5v1h-5zM368 104h4v1h-4zM467 104h4v1h-4zM364 105h4v1h-4zM471 105h4v1h-4zM360 106h4v1h-4zM475 106h4v1h-4zM356 107h4v1h-4zM479 107h4v1h-4zM353 108h3v1h-3zM483 108h3v1h-3zM350 109h3v1h-3zM486 109h3v1h-3zM347 110h3v1h-3zM489 110h4v1h-4zM344 111h3v1h-3zM493 111h2v1h-2zM341 112h3v1h-3zM495 112h3v1h-3zM338 113h3v1h-3zM498 113h3v1h-3zM336 114h2v1h-2zM501 114h3v1h-3zM333 115h3v1h-3zM504 115h2v1h-2zM331 116h2v1h-2zM506 116h2v1h-2zM328 117h3v1h-3zM508 117h3v1h-3zM326 118h2v1h-2zM511 118h2v1h-2zM324 119h2v1h-2zM513 119h2v1h-2zM322 120h2v1h-2zM515 120h2v1h-2zM320 121h2v1h-2zM517 121h3v1h-3zM317 122h3v1h-3zM520 122h2v1h-2zM315 123h2v1h-2zM522 123h2v1h-2zM314 124h1v1h-1zM524 124h2v1h-2zM312 125h2v1h-2zM526 125h1v1h-1zM310 126h2v1h-2zM527 126h2v1h-2zM308 127h2v1h-2zM529 127h2v1h-2zM306 128h2v1h-2zM531 128h2v1h-2zM304 129h2v1h-2zM533 129h2v1h-2zM303 130h1v1h-1zM535 130h1v1h-1zM301 131h2v1h-2zM536 131h2v1h-2zM299 132h2v1h-2zM538 132h2v1h-2zM298 133h1v1h-1zM540 133h1v1h-1zM296 134h2v1h-2zM541 134h2v1h-2zM295 135h1v1h-1zM543 135h1v1h-1zM293 136h2v1h-2zM544 136h2v1h-2zM292 137h1v1h-1zM546 137h2v1h-2zM290 138h2v1h-2zM548 138h1v1h-1zM289 139h1v1h-1zM549 139h1v1h-1zM287 140h2v1h-2zM550 140h2v1h-2zM286 141h1v1h-1zM552 141h1v1h-1zM284 142h2v1h-2zM553 142h2v1h-2zM283 143h1v1h-1zM555 143h1v1h-1zM282 144h1v1h-1zM556 144h1v1h-1zM280 145h2v1h-2zM557 145h2v1h-2zM279 146h1v1h-1zM559 146h1v1h-1zM278 147h1v1h-1zM560 147h1v1h-1zM277 148h1v1h-1zM561 148h2v1h-2zM275 149h2v1h-2zM563 149h1v1h-1zM274 150h1v1h-1zM564 150h1v1h-1zM273 151h1v1h-1zM565 151h1v1h-1zM272 152h1v1h-1zM566 152h1v1h-1zM270 153h2v1h-2zM567 153h2v1h-2zM269 154h1v1h-1zM569 154h1v1h-1zM268 155h1v1h-1zM570 155h1v1h-1zM267 156h1v1h-1zM571 156h1v1h-1zM266 157h1v1h-1zM572 157h1v1h-1zM265 158h1v1h-1zM573 158h1v1h-1zM264 159h1v1h-1zM574 159h1v1h-1zM263 160h1v1h-1zM575 160h1v1h-1zM262 161h1v1h-1zM576 161h2v1h-2zM261 162h1v1h-1zM578 162h1v1h-1zM259 163h2v1h-2zM579 163h1v1h-1zM258 164h1v1h-1zM580 164h1v1h-1zM257 165h1v1h-1zM581 165h1v1h-1zM256 166h1v1h-1zM582 166h1v1h-1zM255 167h1v1h-1zM583 167h1v1h-1zM254 168h1v1h-1zM584 168h1v1h-1zM254 169h1v1h-1zM585 169h1v1h-1zM253 170h1v1h-1zM586 170h1v1h-1zM252 171h1v1h-1zM587 171h1v1h-1zM251 172h1v1h-1zM587 172h1v1h-1zM250 173h1v1h-1zM588 173h1v1h-1zM249 174h1v1h-1zM589 174h1v1h-1zM248 175h1v1h-1zM590 175h1v1h-1zM247 176h1v1h-1zM591 176h1v1h-1zM246 177h1v1h-1zM592 177h1v1h-1zM245 178h1v1h-1zM593 178h1v1h-1zM244 179h1v1h-1zM594 179h1v1h-1zM244 180h1v1h-1zM595 180h1v1h-1zM243 181h1v1h-1zM595 181h1v1h-1zM242 182h1v1h-1zM596 182h1v1h-1zM241 183h1v1h-1zM597 183h1v1h-1zM240 184h1v1h-1zM598 184h1v1h-1zM239 185h1v1h-1zM599 185h1v1h-1zM239 186h1v1h-1zM599 186h1v1h-1zM238 187h1v1h-1zM600 187h1v1h-1zM237 188h1v1h-1zM601 188h1v1h-1zM236 189h1v1h-1zM602 189h1v1h-1zM236 190h1v1h-1zM603 190h1v1h-1zM235 191h1v1h-1zM603 191h1v1h-1zM234 192h1v1h-1zM604 192h1v1h-1zM233 193h1v1h-1zM605 193h1v1h-1zM233 194h1v1h-1zM606 194h1v1h-1zM232 195h1v1h-1zM606 195h1v1h-1zM231 196h1v1h-1zM607 196h1v1h-1zM231 197h1v1h-1zM608 197h1v1h-1zM230 198h1v1h-1zM608 198h1v1h-1zM229 199h1v1h-1zM609 199h1v1h-1zM228 200h1v1h-1zM610 200h1v1h-1zM228 201h1v1h-1zM610 201h1v1h-1zM227 202h1v1h-1zM611 202h1v1h-1zM226 203h1v1h-1zM612 203h1v1h-1zM226 204h1v1h-1zM612 204h1v1h-1zM225 205h1v1h-1zM613 205h1v1h-1zM225 206h1v1h-1zM614 206h1v1h-1zM224 207h1v1h-1zM614 207h1v1h-1zM223 208h1v1h-1zM615 208h1v1h-1zM223 209h1v1h-1zM615 209h1v1h-1zM222 210h1v1h-1zM616 210h1v1h-1zM222 211h1v1h-1zM617 211h1v1h-1zM221 212h1v1h-1zM617 212h1v1h-1zM220 213h1v1h-1zM618 213h1v1h-1zM220 214h1v1h-1zM618 214h1v1h-1zM219 215h1v1h-1zM619 215h1v1h-1zM219 216h1v1h-1zM620 216h1v1h-1zM218 217h1v1h-1zM620 217h1v1h-1zM218 218h1v1h-1zM621 218h1v1h-1zM217 219h1v1h-1zM621 219h1v1h-1zM216 220h1v1h-1zM622 220h1v1h-1zM216 221h1v1h-1zM622 221h1v1h-1zM215 222h1v1h-1zM623 222h1v1h-1zM215 223h1v1h-1zM623 223h1v1h-1zM214 224h1v1h-1zM624 224h1v1h-1zM214 225h1v1h-1zM624 225h1v1h-1zM213 226h1v1h-1zM625 226h1v1h-1zM213 227h1v1h-1zM625 227h1v1h-1zM212 228h1v1h-1zM626 228h1v1h-1zM212 229h1v1h-1zM626 229h1v1h-1zM211 230h1v1h-1zM627 230h1v1h-1zM211 231h1v1h-1zM627 231h1v1h-1zM210 232h1v1h-1zM628 232h1v1h-1zM210 233h1v1h-1zM628 233h1v1h-1zM210 234h1v1h-1zM629 234h1v1h-1zM209 235h1v1h-1zM629 235h1v1h-1zM209 236h1v1h-1zM630 236h1v1h-1zM208 237h1v1h-1zM630 237h1v1h-1zM208 238h1v1h-1zM630 238h1v1h-1zM207 239h1v1h-1zM631 239h1v1h-1zM207 240h1v1h-1zM631 240h1v1h-1zM207 241h1v1h-1zM632 241h1v1h-1zM206 242h1v1h-1zM632 242h1v1h-1zM206 243h1v1h-1zM632 243h1v1h-1zM205 244h1v1h-1zM633 244h1v1h-1zM205 245h1v1h-1zM633 245h1v1h-1zM205 246h1v1h-1zM634 246h1v1h-1zM204 247h1v1h-1zM634 247h1v1h-1zM204 248h1v1h-1zM634 248h1v1h-1zM203 249h1v1h-1zM635 249h1v1h-1zM203 250h1v1h-1zM635 250h1v1h-1zM203 251h1v1h-1zM635 251h1v1h-1zM202 252h1v1h-1zM636 252h1v1h-1zM202 253h1v1h-1zM636 253h1v1h-1zM202 254h1v1h-1zM637 254h1v1h-1zM201 255h1v1h-1zM637 255h1v1h-1zM201 256h1v1h-1zM637 256h1v1h-1zM201 257h1v1h-1zM638 257h1v1h-1zM200 258h1v1h-1zM638 258h1v1h-1zM200 259h1v1h-1zM638 259h1v1h-1zM200 260h1v1h-1zM639 260h1v1h-1zM199 261h1v1h-1zM639 261h1v1h-1zM199 262h1v1h-1zM639 262h1v1h-1zM199 263h1v1h-1zM639 263h1v1h-1zM198 264h1v1h-1zM640 264h1v1h-1zM198 265h1v1h-1zM640 265h1v1h-1zM198 266h1v1h-1zM640 266h1v1h-1zM198 267h1v1h-1zM641 267h1v1h-1zM197 268h1v1h-1zM641 268h1v1h-1zM197 269h1v1h-1zM641 269h1v1h-1zM197 270h1v1h-1zM641 270h1v1h-1zM197 271h1v1h-1zM642 271h1v1h-1zM196 272h1v1h-1zM642 272h1v1h-1zM196 273h1v1h-1zM642 273h1v1h-1zM196 274h1v1h-1zM642 274h1v1h-1zM196 275h1v1h-1zM643 275h1v1h-1zM195 276h1v1h-1zM643 276h1v1h-1zM195 277h1v1h-1zM643 277h1v1h-1zM195 278h1v1h-1zM643 278h1v1h-1zM195 279h1v1h-1zM644 279h1v1h-1zM194 280h1v1h-1zM644 280h1v1h-1zM194 281h1v1h-1zM644 281h1v1h-1zM194 282h1v1h-1zM644 282h1v1h-1zM194 283h1v1h-1zM644 283h1v1h-1zM194 284h1v1h-1zM645 284h1v1h-1zM193 285h1v1h-1zM645 285h1v1h-1zM193 286h1v1h-1zM645 286h1v1h-1zM193 287h1v1h-1zM645 287h1v1h-1zM193 288h1v1h-1zM645 288h1v1h-1zM193 289h1v1h-1zM646 289h1v1h-1zM193 290h1v1h-1zM646 290h1v1h-1zM192 291h1v1h-1zM646 291h1v1h-1zM192 292h1v1h-1zM646 292h1v1h-1zM192 293h1v1h-1zM646 293h1v1h-1zM192 294h1v1h-1zM646 294h1v1h-1zM192 295h1v1h-1zM646 295h1v1h-1zM192 296h1v1h-1zM647 296h1v1h-1zM191 297h1v1h-1zM647 297h1v1h-1zM191 298h1v1h-1zM647 298h1v1h-1zM191 299h1v1h-1zM647 299h1v1h-1zM191 300h1v1h-1zM647 300h1v1h-1zM191 301h1v1h-1zM647 301h1v1h-1zM191 302h1v1h-1zM647 302h1v1h-1zM191 303h1v1h-1zM648 303h1v1h-1zM191 304h1v1h-1zM648 304h1v1h-1zM190 305h1v1h-1zM648 305h1v1h-1zM190 306h1v1h-1zM648 306h1v1h-1zM190 307h1v1h-1zM648 307h1v1h-1zM190 308h1v1h-1zM648 308h1v1h-1zM190 309h1v1h-1zM648 309h1v1h-1zM190 310h1v1h-1zM648 310h1v1h-1zM190 311h1v1h-1zM648 311h1v1h-1zM190 312h1v1h-1zM648 312h1v1h-1zM190 313h1v1h-1zM648 313h1v1h-1zM190 314h1v1h-1zM648 314h1v1h-1zM190 315h1v1h-1zM649 315h1v1h-1zM190 316h1v1h-1zM649 316h1v1h-1zM190 317h1v1h-1zM649 317h1v1h-1zM190 318h1v1h-1zM649 318h1v1h-1zM189 319h1v1h-1zM649 319h1v1h-1zM189 320h1v1h-1zM649 320h1v1h-1zM189 321h1v1h-1zM649 321h1v1h-1zM189 322h1v1h-1zM649 322h1v1h-1zM189 323h1v1h-1zM649 323h1v1h-1zM189 324h1v1h-1zM649 324h1v1h-1zM189 325h1v1h-1zM649 325h1v1h-1zM189 326h1v1h-1zM649 326h1v1h-1zM189 327h1v1h-1zM649 327h1v1h-1zM189 328h1v1h-1zM649 328h1v1h-1zM189 329h1v1h-1zM649 329h1v1h-1zM189 330h1v1h-1zM649 330h1v1h-1zM189 331h1v1h-1zM649 331h1v1h-1zM189 332h1v1h-1zM649 332h1v1h-1zM189 333h1v1h-1zM649 333h1v1h-1zM189 334h1v1h-1zM649 334h1v1h-1zM189 335h1v1h-1zM649 335h1v1h-1zM189 336h1v1h-1zM649 336h1v1h-1zM189 337h1v1h-1zM649 337h1v1h-1zM190 338h1v1h-1zM649 338h1v1h-1zM190 339h1v1h-1zM649 339h1v1h-1zM190 340h1v1h-1zM649 340h1v1h-1zM190 341h1v1h-1zM649 341h1v1h-1zM190 342h1v1h-1zM648 342h1v1h-1zM190 343h1v1h-1zM648 343h1v1h-1zM190 344h1v1h-1zM648 344h1v1h-1zM190 345h1v1h-1zM648 345h1v1h-1zM190 346h1v1h-1zM648 346h1v1h-1zM190 347h1v1h-1zM648 347h1v1h-1zM190 348h1v1h-1zM190 349h1v1h-1zM190 350h1v1h-1zM190 351h1v1h-1zM191 352h1v1h-1zM191 353h1v1h-1zM191 354h1v1h-1zM191 355h1v1h-1zM191 356h1v1h-1zM191 357h1v1h-1zM191 358h1v1h-1zM191 359h1v1h-1zM191 360h1v1h-1zM192 361h1v1h-1zM192 362h1v1h-1zM192 363h1v1h-1zM192 364h1v1h-1zM192 365h1v1h-1zM192 366h1v1h-1zM193 367h1v1h-1zM193 368h1v1h-1zM193 369h1v1h-1zM193 370h1v1h-1zM193 371h1v1h-1zM193 372h1v1h-1zM194 373h1v1h-1zM194 374h1v1h-1zM194 375h1v1h-1zM194 376h1v1h-1zM195 377h1v1h-1zM195 378h1v1h-1zM195 379h1v1h-1zM195 380h1v1h-1zM195 381h1v1h-1zM196 382h1v1h-1zM196 383h1v1h-1zM196 384h1v1h-1zM196 385h1v1h-1zM197 386h1v1h-1zM197 387h1v1h-1zM197 388h1v1h-1zM197 389h1v1h-1zM198 390h1v1h-1zM198 391h1v1h-1zM198 392h1v1h-1zM199 393h1v1h-1zM199 394h1v1h-1zM199 395h1v1h-1zM200 396h1v1h-1zM200 397h1v1h-1zM200 398h1v1h-1zM200 399h1v1h-1zM201 400h1v1h-1zM201 401h1v1h-1zM201 402h1v1h-1zM202 403h1v1h-1zM202 404h1v1h-1zM202 405h1v1h-1zM203 406h1v1h-1zM203 407h1v1h-1zM204 408h1v1h-1zM204 409h1v1h-1zM204 410h1v1h-1zM205 411h1v1h-1zM205 412h1v1h-1zM205 413h1v1h-1zM206 414h1v1h-1zM206 415h1v1h-1zM207 416h1v1h-1zM207 417h1v1h-1zM208 418h1v1h-1zM208 419h1v1h-1zM208 420h1v1h-1zM209 421h1v1h-1zM209 422h1v1h-1zM210 423h1v1h-1zM210 424h1v1h-1zM211 425h1v1h-1zM211 426h1v1h-1zM212 427h1v1h-1zM212 428h1v1h-1zM213 429h1v1h-1zM213 430h1v1h-1zM214 431h1v1h-1zM214 432h1v1h-1zM215 433h1v1h-1zM215 434h1v1h-1zM216 435h1v1h-1zM216 436h1v1h-1zM217 437h1v1h-1zM217 438h1v1h-1zM218 439h1v1h-1zM218 440h1v1h-1zM219 441h1v1h-1zM219 442h1v1h-1zM220 443h1v1h-1zM221 444h1v1h-1zM221 445h1v1h-1zM222 446h1v1h-1zM222 447h1v1h-1zM223 448h1v1h-1zM224 449h1v1h-1zM224 450h1v1h-1zM225 451h1v1h-1zM225 452h1v1h-1zM226 453h1v1h-1zM227 454h1v1h-1zM227 455h1v1h-1zM228 456h1v1h-1zM229 457h1v1h-1zM229 458h1v1h-1zM230 459h1v1h-1zM231 460h1v1h-1zM232 461h1v1h-1zM232 462h1v1h-1zM233 463h1v1h-1zM234 464h1v1h-1zM234 465h1v1h-1zM235 466h1v1h-1zM236 467h1v1h-1zM237 468h1v1h-1zM237 469h1v1h-1zM238 470h1v1h-1zM239 471h1v1h-1zM240 472h1v1h-1zM241 473h1v1h-1zM241 474h1v1h-1zM242 475h1v1h-1zM243 476h1v1h-1zM244 477h1v1h-1zM245 478h1v1h-1zM246 479h1v1h-1zM247 480h1v1h-1zM247 481h1v1h-1zM248 482h1v1h-1zM249 483h1v1h-1zM250 484h1v1h-1zM251 485h1v1h-1zM252 486h1v1h-1zM253 487h1v1h-1zM254 488h1v1h-1zM255 489h1v1h-1zM256 490h1v1h-1zM257 491h1v1h-1zM258 492h1v1h-1zM259 493h1v1h-1zM260 494h1v1h-1zM261 495h1v1h-1zM262 496h1v1h-1zM263 497h1v1h-1zM264 498h1v1h-1zM265 499h1v1h-1zM266 500h1v1h-1zM267 501h2v1h-2zM269 502h1v1h-1zM270 503h1v1h-1zM271 504h1v1h-1zM272 505h1v1h-1zM273 506h2v1h-2zM275 507h1v1h-1zM276 508h1v1h-1zM277 509h1v1h-1zM278 510h2v1h-2zM280 511h1v1h-1zM281 512h1v1h-1zM282 513h2v1h-2zM284 514h1v1h-1zM285 515h1v1h-1zM286 516h2v1h-2zM288 517h1v1h-1zM289 518h2v1h-2zM291 519h1v1h-1zM292 520h2v1h-2zM294 521h1v1h-1zM295 522h2v1h-2zM297 523h1v1h-1zM298 524h2v1h-2zM300 525h2v1h-2zM302 526h1v1h-1zM303 527h2v1h-2zM305 528h2v1h-2zM307 529h2v1h-2zM309 530h2v1h-2zM311 531h1v1h-1zM312 532h2v1h-2zM314 533h2v1h-2zM316 534h2v1h-2zM318 535h2v1h-2zM320 536h2v1h-2zM322 537h3v1h-3zM325 538h2v1h-2zM327 539h2v1h-2zM329 540h3v1h-3zM332 541h2v1h-2zM334 542h3v1h-3zM337 543h2v1h-2zM339 544h3v1h-3zM342 545h3v1h-3zM345 546h3v1h-3zM348 547h3v1h-3zM351 548h3v1h-3zM354 549h4v1h-4zM358 550h3v1h-3zM361 551h4v1h-4zM365 552h5v1h-5zM370 553h4v1h-4zM374 554h6v1h-6zM380 555h6v1h-6zM386 556h7v1h-7zM393 557h11v1h-11zM404 558h24v1h-24zM648 348h276v1h-276zM923 348h1v252h-1zM500 599h424v1h-424zM648 342h1v7h-1z"/>
<rect x="360.5" y="411.5" width="12" height="12" fill="none" stroke="#ffffff" stroke-width="1"/>
<rect x="366" y="53" width="1" height="359" fill="#8fca5e"/>
<rect x="366" y="423" width="1" height="332" fill="#8fca5e"/>
<rect x="0" y="417" width="361" height="1" fill="#cf7f5f"/>
<rect x="372" y="417" width="592" height="1" fill="#cf7f5f"/>
</svg>
<div class="abs" style="left:0;top:0;width:964px;height:53px;background:#3b4453">
 <div class="abs" style="left:0;top:48px;width:189px;height:1px;background:#242930"></div>
 <div class="abs" style="left:188px;top:0;width:1px;height:49px;background:#242930"></div>
 <div class="abs" style="left:0;top:52px;width:964px;height:1px;background:#414a59"></div>
 <svg width="60" height="48" shape-rendering="crispEdges">
  <path fill="#dedede" d="M0 4h3v1h-3zM2 4h1v9h-1z M0 42h3v1h-3zM2 34h1v9h-1z M13 4h10v1h-10zM13 4h1v10h-1z M43 4h10v1h-10zM52 4h1v10h-1z M13 43h10v1h-10zM13 34h1v10h-1z M43 43h10v1h-10zM52 34h1v10h-1z"/>
  <rect x="24" y="17" width="18" height="14" fill="#d9d9d9"/>
  <rect x="24" y="30" width="18" height="1" fill="#a8a8a8"/>
  <path fill="#62b0ea" d="M22 15h1v22h-1zM22 15h22v1h-22zM43 10h1v22h-1zM17 31h27v1h-27z"/>
  <rect x="44" y="15" width="5" height="1" fill="#4a86b8"/>
 </svg>
 <div class="abs" style="left:60px;top:2px;width:1px;height:44px;background:#0f1115"></div>
 <div class="abs" style="left:61px;top:2px;width:1px;height:44px;background:#a2a8b3"></div>
 <div class="abs" style="left:66px;top:26px;width:1px;height:20px;background:#0f1115"></div>
 <div class="abs" style="left:67px;top:26px;width:1px;height:20px;background:#a2a8b3"></div>
 <div class="abs" style="left:64px;top:0;width:124px;height:26px;background:#ffffff;border-top:1px solid #c8c8c8"></div>
 <div class="abs" style="left:67px;top:3px;width:98px;height:20px;background:#eeeeee"></div>
 <svg class="abs" style="left:173px;top:10px" width="12" height="7"><path d="M1 1L5.5 5.5L10 1" fill="none" stroke="#7a7a7a" stroke-width="1.1"/></svg>
</div>
<!-- input box -->
<div class="abs" style="left:382px;top:434px;width:72px;height:26px;background:#fff;border:1px solid #484c52;border-bottom:1px solid #3c3c3c"></div>
<div class="abs" style="left:386px;top:435px;height:23px;line-height:23px;font-size:16px;color:#000;transform:scaleX(0.92);transform-origin:0 0">LI</div>
<!-- popup -->
<div class="abs" style="left:382px;top:460px;width:275px;height:163px;background:#3b4453;border:1px solid #7c7c7c"></div>
<div class="abs" style="left:383px;top:461px;width:252px;height:23px;background:#262b35"></div>
<div class="abs" style="left:635px;top:461px;width:21px;height:161px;background:#f0f0f0;border-left:1px solid #fcfcfc"></div>
<div class="abs" style="left:636px;top:482px;width:19px;height:49px;background:#cdcdcd"></div>
<svg class="abs" style="left:635px;top:461px" width="21" height="161">
 <path d="M6.5 13.8L10.5 9.3L14.5 13.8" fill="none" stroke="#505050" stroke-width="2"/>
 <path d="M6.5 147.7L10.5 152.2L14.5 147.7" fill="none" stroke="#505050" stroke-width="2"/>
</svg>
<div class="it" style="top:461px;transform:scaleX(0.9180)">LI (LIST)</div>
<div class="it" style="top:484px;transform:scaleX(0.9412)">LINE</div>
<div class="it" style="top:507px;transform:scaleX(0.8816)">LINETYPE</div>
<div class="it" style="top:530px;transform:scaleX(0.9600)">LIMITS</div>
<div class="it" style="top:553px;transform:scaleX(0.9293)">LINEWEIGHT (LWEIGHT)</div>
<div class="it" style="top:576px;transform:scaleX(0.8942)">LIVESECTION</div>
<div class="it" style="top:599px;transform:scaleX(0.9125)">LIGHTLIST</div>

<svg class="abs" style="left:382px;top:460px" width="275" height="163" viewBox="382 460 275 163">
 <!-- LIST icon -->
 <rect x="387" y="462" width="15" height="17" fill="#a9a9a9"/>
 <rect x="387" y="462" width="15" height="16" fill="#eeeeee"/>
 <rect x="388" y="463" width="13" height="15" fill="#dedede"/>
 <path fill="#505050" d="M390 465h2v2h-2zM390 469h2v2h-2zM390 473h2v2h-2z"/>
 <path fill="#6a6a6a" d="M393 466h6v1h-6zM393 470h6v1h-6zM393 474h6v1h-6z"/>
 <circle cx="402.5" cy="477.5" r="5.8" fill="#262b35"/>
 <circle cx="402.5" cy="477.5" r="4.8" fill="#5cb0e8"/>
 <rect x="402" y="474" width="1.2" height="1.4" fill="#fff"/>
 <rect x="402" y="476.8" width="1.2" height="3.6" fill="#fff"/>
 <!-- LINE icon -->
 <path d="M389.5 502.5L405 487" stroke="#b4b4b4" stroke-width="1"/>
 <rect x="404" y="485" width="3" height="3" fill="#6cc0f8"/>
 <rect x="387" y="502" width="3" height="3" fill="#6cc0f8"/>
 <!-- LIMITS icon -->
 <g shape-rendering="crispEdges">
 <rect x="390" y="534" width="13" height="13" fill="#2c313c"/>
 <path fill="#808389" d="M393 535h1v11h-1zM396 535h1v11h-1zM399 535h1v11h-1zM391 537h11v1h-11zM391 540h11v1h-11zM391 543h11v1h-11z"/>
 <path fill="#d2d2d2" d="M389 532h1v13h-1zM388 533h13v1h-13zM403 536h1v13h-1zM392 547h13v1h-13z"/>
 <rect x="402" y="532" width="3" height="3" fill="#6cc0f8"/>
 <rect x="388" y="546" width="3" height="3" fill="#6cc0f8"/>
 </g>
 <!-- LIVESECTION icon -->
 <path d="M388 586L391 583H403.5V588L399 591H388Z" fill="#dcdcdc"/>
 <path d="M388 586L391 583H403.5L399 586Z" fill="#f6f6f6"/>
 <path d="M399 586L403.5 583V588L399 591Z" fill="#bdbdbd"/>
 <path d="M398.5 584L404.5 578.5V588.5L398.5 596Z" fill="rgba(98,180,238,0.12)" stroke="#62b4ee" stroke-width="1"/>
 <!-- LIGHTLIST icon -->
 <path d="M387 610L397 600.5Q401 598.5 403.5 602Q405 605.5 402 608L393 616Z" fill="#dadada"/>
 <path d="M396.5 601.5Q400 603 401 606.5" stroke="#8a8a8a" stroke-width="0.9" fill="none"/>
 <ellipse cx="389.8" cy="613.6" rx="3.4" ry="2.4" transform="rotate(50 389.8 613.6)" fill="#f4cd6e" stroke="#2b2f38" stroke-width="0.7"/>
 <rect x="394" y="607" width="14" height="14" fill="#2a2f38"/>
 <rect x="395" y="608" width="12" height="12" fill="#f4f4f4"/>
 <g shape-rendering="crispEdges">
 <path fill="#2a86e0" d="M398 611h2v1h-2zM398 613h2v2h-2zM398 616h2v1h-2zM400 614h5v1h-5z"/>
 <path fill="#94c8f0" d="M400 611h5v1h-5zM400 616h5v1h-5z"/>
 </g>
</svg>
</body></html>
